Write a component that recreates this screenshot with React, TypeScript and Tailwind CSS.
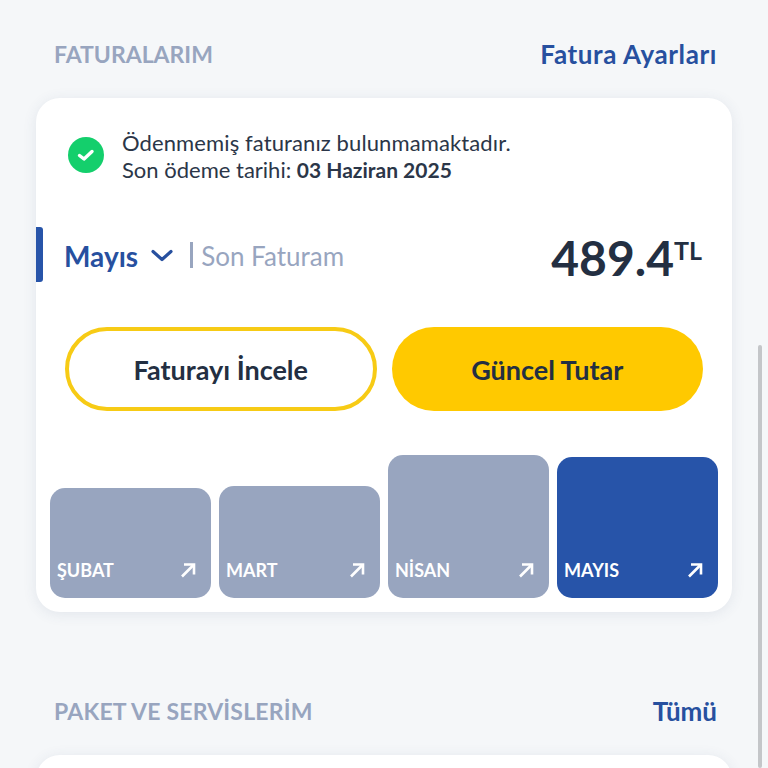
const bars = [
  { label: 'ŞUBAT', height: 'h-[110px]', color: 'bg-[#98a5bf]' },
  { label: 'MART', height: 'h-[112px]', color: 'bg-[#98a5bf]' },
  { label: 'NİSAN', height: 'h-[143px]', color: 'bg-[#98a5bf]' },
  { label: 'MAYIS', height: 'h-[141px]', color: 'bg-[#2754a9]' },
];

const ArrowIcon = () => (
  <svg width="16" height="16" viewBox="0 0 16 16" fill="none" stroke="white" strokeWidth="2.6">
    <path d="M2 14.5 13.5 3" />
    <path d="M4 2.5h10v10" />
  </svg>
);

const CheckIcon = () => (
  <svg width="20" height="16" viewBox="0 0 20 16" fill="none" stroke="white" strokeWidth="3.4" strokeLinecap="round" strokeLinejoin="round">
    <path d="M3.5 8.5 8 12l8-7.5" />
  </svg>
);

const ChevronIcon = () => (
  <svg width="22" height="13" viewBox="0 0 22 13" fill="none" stroke="#27509f" strokeWidth="3.2" strokeLinecap="round" strokeLinejoin="round">
    <path d="M2 2.5 11 10.5 20 2.5" />
  </svg>
);

const SectionHeader = ({ title, action, titleClass, actionClass }: { title: string; action: string; titleClass?: string; actionClass?: string }) => (
  <div className="flex items-center justify-between pl-[18px] pr-[15px]">
    <h2 className={`text-[23px] leading-[28px] font-bold text-[#98a5bf] ${titleClass ?? ''}`}>{title}</h2>
    <button className={`text-[26px] leading-[28px] font-bold text-[#27509f] ${actionClass ?? ''}`}>{action}</button>
  </div>
);

export default function App() {
  return (
    <div className="relative h-[768px] overflow-hidden bg-[#f5f7f9] px-[36px] pt-[40px] font-['Lato',sans-serif]">
      {/* Faturalarim */}
      <SectionHeader title="FATURALARIM" action="Fatura Ayarları" actionClass="tracking-[0.6px]" />

      <div className="mt-[30px] h-[514px] rounded-[24px] bg-white pt-[31px] shadow-[0_2px_14px_rgba(60,80,120,0.10)]">
        <div className="flex items-center gap-[18px] pl-[32px]">
          <div className="mb-[2px] flex h-[36px] w-[36px] items-center justify-center rounded-full bg-[#14cf6c]">
            <CheckIcon />
          </div>
          <p className="text-[22px] leading-[27px] text-[#2b3648]">
            <span className="tracking-[0.11px]">Ödenmemiş faturanız bulunmamaktadır.</span>
            <br />
            Son ödeme tarihi: <span className="text-[21px] font-bold">03 Haziran 2025</span>
          </p>
        </div>

        {/* Son fatura */}
        <div className="mt-[44px] flex h-[55px] items-center">
          <div className="h-[55px] w-[7px] rounded-r-[3px] bg-[#2754a9]" />
          <span className="ml-[21px] pt-[2px] text-[28px] font-bold text-[#27509f]">Mayıs</span>
          <span className="ml-[13px] pt-[1px]">
            <ChevronIcon />
          </span>
          <div className="ml-[17px] h-[26px] w-[3px] bg-[#98a5bf]" />
          <span className="ml-[8px] pt-[3px] text-[26px] text-[#98a5bf]">Son Faturam</span>
          <div className="ml-auto mr-[30px] mt-[6px] flex items-start text-[#232f42]">
            <span className="text-[48px] leading-[55px] font-bold">489.4</span>
            <span className="mt-[6px] text-[25px] leading-[28px] font-bold">TL</span>
          </div>
        </div>

        <div className="mt-[45px] grid grid-cols-2 gap-[15px] px-[29px]">
          <button className="h-[84px] rounded-full border-[4px] border-[#f7cb15] bg-white pt-[2px] text-[27px] font-bold text-[#232f42]">
            Faturayı İncele
          </button>
          <button className="h-[84px] rounded-full bg-[#ffc900] pt-[2px] text-[27px] font-bold text-[#232f42]">
            Güncel Tutar
          </button>
        </div>

        <div className="mt-[44px] flex h-[143px] items-end gap-[8px] px-[14px]">
          {bars.map((bar) => (
            <div
              key={bar.label}
              className={`flex flex-1 items-end justify-between rounded-[15px] pb-[16px] pl-[7px] pr-[15px] ${bar.height} ${bar.color}`}
            >
              <span className="text-[18px] leading-[24px] font-bold text-white">{bar.label}</span>
              <span className="pb-[4px]">
                <ArrowIcon />
              </span>
            </div>
          ))}
        </div>
      </div>

      {/* Paket ve servisler */}
      <div className="mt-[85px]">
        <SectionHeader title="PAKET VE SERVİSLERİM" action="Tümü" titleClass="tracking-[0.2px]" />
      </div>
      <div className="mt-[30px] h-[100px] rounded-[24px] bg-white shadow-[0_2px_14px_rgba(60,80,120,0.10)]" />

      {/* scrollbar */}
      <div className="absolute bottom-0 right-[6px] top-[345px] w-[4px] rounded-full bg-[#c4c6c9]" />
    </div>
  );
}
